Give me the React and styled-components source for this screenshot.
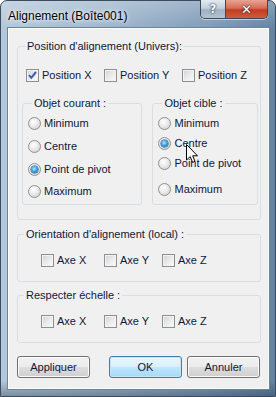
import React from 'react'
import styled, { createGlobalStyle } from 'styled-components'

const GlobalStyle = createGlobalStyle`
  html, body {
    margin: 0;
    padding: 0;
    background: #ffffff;
  }
  body {
    width: 276px;
    height: 397px;
    overflow: hidden;
  }
`

const Window = styled.div`
  position: relative;
  width: 276px;
  height: 397px;
  box-sizing: border-box;
  display: flex;
  flex-direction: column;
  border: 1px solid #3d4b5a;
  border-radius: 7px 7px 0 0;
  padding: 0 6px 7px 7px;
  background:
    linear-gradient(180deg, rgba(255,255,255,0.25) 0%, rgba(255,255,255,0) 28px, rgba(0,0,0,0) 380px, rgba(20,40,60,0.35) 100%),
    linear-gradient(90deg, #b4c8db 0%, #9db5cc 40%, #7f9cb8 75%, #6283a2 100%);
  font-family: "Liberation Sans", Arial, sans-serif;
`

const TitleBar = styled.div`
  height: 27px;
  display: flex;
  justify-content: space-between;
  align-items: flex-start;
`

const Title = styled.div`
  padding-top: 7px;
  font-family: "Liberation Sans", Arial, sans-serif;
  font-size: 12px;
  line-height: 16px;
  color: #000;
  text-shadow: 0 0 6px rgba(255,255,255,0.9), 0 0 3px rgba(255,255,255,0.9);
`

const Controls = styled.div`
  display: flex;
  margin-top: -1px;
  margin-right: 1px;
  border: 1px solid #3b4857;
  border-top: none;
  border-radius: 0 0 5px 5px;
  overflow: hidden;
  box-shadow: 0 1px 0 rgba(255,255,255,0.5);
`

const CaptionButton = styled.div`
  width: ${p => p.$w}px;
  height: 18px;
  display: flex;
  align-items: center;
  justify-content: center;
  font-family: "DejaVu Sans", sans-serif;
  font-weight: bold;
  font-size: ${p => (p.$close ? 13 : 12)}px;
  color: #fff;
  text-shadow: 0 0 2px #1c2a38, 0 0 1px #1c2a38;
  background: ${p => p.$close
    ? 'linear-gradient(180deg, #e8a392 0%, #d56d58 45%, #c23b22 55%, #cf5a3c 100%)'
    : 'linear-gradient(180deg, #e4eaf0 0%, #c2cfdc 45%, #9fb1c3 55%, #b3c3d2 100%)'};
  & + & {
    border-left: 1px solid #3b4857;
  }
`

const Client = styled.div`
  flex: 1;
  display: flex;
  flex-direction: column;
  background: #f0f0f0;
  border: 1px solid #fbfcfd;
  box-shadow: 0 0 0 1px #6d8398;
  padding: 0 7px 0 8px;
  font-size: 11px;
  color: #0e1838;
`

const Group = styled.fieldset`
  margin: ${p => p.$top || 0}px 0 0 0;
  padding: ${p => p.$pad};
  border: 1px solid #d5dfe5;
  border-radius: 3px;
  min-width: 0;
  box-sizing: border-box;
  width: ${p => (p.$w ? `${p.$w}px` : 'auto')};
`

const Legend = styled.legend`
  margin-left: ${p => p.$indent}px;
  padding: 0 2px;
  font-size: 11px;
  line-height: 13px;
  color: #0e1838;
`

const CheckRow = styled.div`
  display: grid;
  grid-template-columns: ${p => p.$cols};
  margin-left: ${p => p.$left}px;
  margin-top: 13px;
  height: 13px;
`

const Option = styled.label`
  display: flex;
  align-items: center;
  gap: 3px;
  height: 13px;
  line-height: 13px;
  white-space: nowrap;
  margin-top: ${p => p.$space || 0}px;
`

const Box = styled.span`
  position: relative;
  width: 13px;
  height: 13px;
  box-sizing: border-box;
  flex: none;
  border: 1px solid #8e8f8f;
  background: linear-gradient(135deg, #cdd0d5 0%, #e9eaec 50%, #fbfbfb 100%);
  box-shadow: inset 0 0 0 1px #f3f3f3;
  svg {
    position: absolute;
    left: 0;
    top: 0;
  }
`

const Radio = styled.span`
  position: relative;
  width: 13px;
  height: 13px;
  box-sizing: border-box;
  flex: none;
  border-radius: 50%;
  border: 1px solid #8f9090;
  background: radial-gradient(circle at 40% 35%, #ffffff 0%, #eaeaea 45%, #c9caca 100%);
  &::after {
    content: '';
    display: ${p => (p.$on ? 'block' : 'none')};
    position: absolute;
    left: 2px;
    top: 2px;
    width: 7px;
    height: 7px;
    border-radius: 50%;
    background: radial-gradient(circle at 45% 40%, #b8eaff 0%, #3aa6e6 45%, #14508f 100%);
    box-shadow: 0 0 0 0.5px #1d4f7c;
  }
`

const Columns = styled.div`
  display: flex;
  gap: 10px;
  margin-top: 15px;
`

const RadioList = styled.div`
  display: flex;
  flex-direction: column;
`

const ButtonRow = styled.div`
  display: flex;
  margin: 13px 1px 0 0;
`

const ButtonPair = styled.div`
  display: flex;
  gap: 5px;
  margin-left: auto;
`

const Button = styled.div`
  width: 73px;
  height: 22px;
  box-sizing: border-box;
  display: flex;
  align-items: center;
  justify-content: center;
  border-radius: 3px;
  font-size: 11px;
  color: #0e1838;
  border: 1px solid ${p => (p.$default ? '#3c7fb1' : '#707070')};
  box-shadow: inset 0 0 0 1px ${p => (p.$default ? '#c4e5f6' : '#fbfbfb')};
  background: ${p => p.$default
    ? 'linear-gradient(180deg, #eaf6fd 0%, #d9f0fc 50%, #bee6fd 51%, #a7d9f5 100%)'
    : 'linear-gradient(180deg, #f2f2f2 0%, #ebebeb 50%, #dddddd 51%, #cfcfcf 100%)'};
`

const Cursor = styled.svg`
  position: absolute;
  left: 185px;
  top: 143px;
`

const Check = () => (
  <svg width="11" height="11" viewBox="0 0 11 11">
    <path d="M2 5.2 L4.3 7.8 L9 2" fill="none" stroke="#3d5aa8" strokeWidth="2" />
  </svg>
)

const CheckItem = ({ label, checked }) => (
  <Option>
    <Box>{checked && <Check />}</Box>
    {label}
  </Option>
)

const RadioItem = ({ label, on, space }) => (
  <Option $space={space}>
    <Radio $on={on} />
    {label}
  </Option>
)

export default function App() {
  return (
    <>
      <GlobalStyle />
      <Window>
        <TitleBar>
          <Title>Alignement (Boîte001)</Title>
          <Controls>
            <CaptionButton $w={24}>?</CaptionButton>
            <CaptionButton $w={41} $close>✕</CaptionButton>
          </Controls>
        </TitleBar>
        <Client>
          <Group $top={11} $pad="0 2px 14px 4px">
            <Legend $indent={3}>Position d'alignement (Univers):</Legend>
            <CheckRow $cols="78px 78px 78px" $left={4} style={{ marginTop: 16 }}>
              <CheckItem label="Position X" checked />
              <CheckItem label="Position Y" />
              <CheckItem label="Position Z" />
            </CheckRow>
            <Columns>
              <Group $w={121} $pad="0 0 6px 5px">
                <Legend $indent={4}>Objet courant :</Legend>
                <RadioList>
                  <RadioItem label="Minimum" space={7} />
                  <RadioItem label="Centre" space={10} />
                  <RadioItem label="Point de pivot" on space={10} />
                  <RadioItem label="Maximum" space={9} />
                </RadioList>
              </Group>
              <Group $w={106} $pad="0 0 6px 5px">
                <Legend $indent={4}>Objet cible :</Legend>
                <RadioList>
                  <RadioItem label="Minimum" space={7} />
                  <RadioItem label="Centre" on space={7} />
                  <RadioItem label="Point de pivot" space={7} />
                  <RadioItem label="Maximum" space={13} />
                </RadioList>
              </Group>
            </Columns>
          </Group>

          <Group $top={8} $pad="0 0 14px 0">
            <Legend $indent={6}>Orientation d'alignement (local) :</Legend>
            <CheckRow $cols="63px 58px auto" $left={23}>
              <CheckItem label="Axe X" />
              <CheckItem label="Axe Y" />
              <CheckItem label="Axe Z" />
            </CheckRow>
          </Group>

          <Group $top={7} $pad="0 0 14px 0">
            <Legend $indent={6}>Respecter échelle :</Legend>
            <CheckRow $cols="63px 58px auto" $left={23}>
              <CheckItem label="Axe X" />
              <CheckItem label="Axe Y" />
              <CheckItem label="Axe Z" />
            </CheckRow>
          </Group>

          <ButtonRow>
            <Button>Appliquer</Button>
            <ButtonPair>
              <Button $default>OK</Button>
              <Button>Annuler</Button>
            </ButtonPair>
          </ButtonRow>
        </Client>
        <Cursor width="13" height="20" viewBox="0 0 13 20">
          <path
            d="M0.5 0.5 L0.5 16 L4.2 12.6 L6.6 18.4 L9 17.4 L6.7 11.8 L11.5 11.8 Z"
            fill="#fff"
            stroke="#000"
            strokeWidth="1"
            strokeLinejoin="round"
          />
        </Cursor>
      </Window>
    </>
  )
}
